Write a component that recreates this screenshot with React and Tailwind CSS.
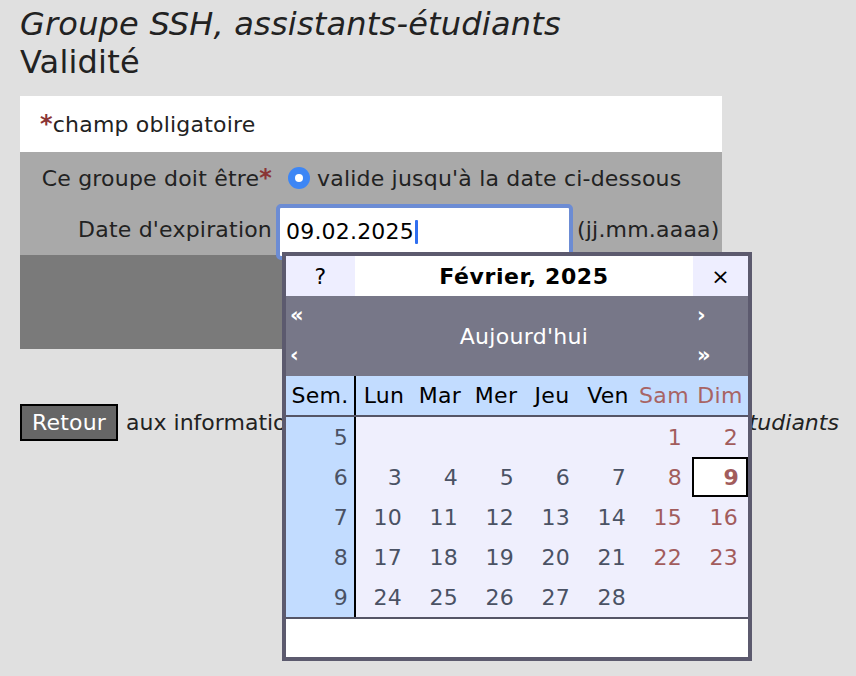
const weeks = [
  { n: 5, days: [null, null, null, null, null, 1, 2] },
  { n: 6, days: [3, 4, 5, 6, 7, 8, 9] },
  { n: 7, days: [10, 11, 12, 13, 14, 15, 16] },
  { n: 8, days: [17, 18, 19, 20, 21, 22, 23] },
  { n: 9, days: [24, 25, 26, 27, 28, null, null] },
];

const dayNames = ["Lun", "Mar", "Mer", "Jeu", "Ven", "Sam", "Dim"];

function Star() {
  return <span className="text-[#8b3535] font-bold text-[24px] leading-none">*</span>;
}

function Calendar() {
  return (
    <div className="absolute left-[262px] top-[156px] w-[470px] border-4 border-[#5c5a6e] bg-white text-[22px] tracking-[0.3px]">
      <div className="flex h-[40px] items-center">
        <div className="w-[69px] h-full bg-[#eeeeff] flex items-center justify-center text-black">?</div>
        <div className="flex-1 h-full bg-white flex items-center justify-center font-bold text-black tracking-[0.6px]">
          Février, 2025
        </div>
        <div className="w-[55px] h-full bg-[#eeeeff] flex items-center justify-center text-black">×</div>
      </div>

      <div className="h-[80px] bg-[#777788] text-white grid grid-cols-[69px_1fr_55px] grid-rows-2">
        <div className="pl-[4px] flex items-center font-bold text-[21px]">«</div>
        <div className="row-span-2 flex items-center justify-center">Aujourd'hui</div>
        <div className="pl-[4px] flex items-center font-bold text-[21px]">›</div>
        <div className="pl-[4px] flex items-center font-bold text-[21px]">‹</div>
        <div className="pl-[4px] flex items-center font-bold text-[21px]">»</div>
      </div>

      <div className="flex h-[41px] bg-[#c2dcff] border-b-2 border-[#555566]">
        <div className="w-[70px] border-r-2 border-black flex items-center justify-center text-black">Sem.</div>
        {dayNames.map((d, i) => (
          <div
            key={d}
            className={`w-[56px] flex items-center justify-center ${i > 4 ? "text-[#a86464]" : "text-black"}`}
          >
            {d}
          </div>
        ))}
      </div>

      {weeks.map((w) => (
        <div key={w.n} className="flex h-[40px]">
          <div className="w-[70px] bg-[#c2dcff] border-r-2 border-black flex items-center justify-end pr-[6px] text-[#4a5264]">
            {w.n}
          </div>
          {w.days.map((d, i) => {
            const weekend = i > 4;
            const selected = d === 9;
            return (
              <div
                key={i}
                className={`w-[56px] flex items-center justify-end ${
                  selected ? "bg-white border-2 border-black font-bold pr-[7px]" : "bg-[#efeffd] pr-[10px]"
                } ${weekend ? "text-[#a25c5c]" : "text-[#4a5264]"}`}
              >
                {d}
              </div>
            );
          })}
        </div>
      ))}

      <div className="h-[40px] border-t-2 border-[#555566] bg-white" />
    </div>
  );
}

export default function App() {
  return (
    <div className="min-h-screen bg-[#e0e0e0] font-['DejaVu_Sans',Verdana,sans-serif] text-[#222] pt-[5px]">
      <h1 className="px-5 text-[32px] leading-[38px] font-normal tracking-[0.2px]">
        <i>Groupe SSH, assistants-étudiants</i>
        <br />
        Validité
      </h1>

      <div className="relative mx-5 mt-[15px] w-[702px] text-[22px] tracking-[0.2px]">
        <div className="h-[56px] bg-white flex items-center px-5">
          <Star />
          champ obligatoire
        </div>

        <div className="h-[103px] bg-[#a9a9a9] pt-[1px]">
          <div className="flex items-center h-[50px]">
            <div className="w-[256px] text-right pr-[4px] flex items-center justify-end">
              Ce groupe doit être
              <Star />
            </div>
            <div className="ml-[12px] w-[22px] h-[22px] rounded-full bg-[#3d86f5] flex items-center justify-center shrink-0">
              <div className="w-[8px] h-[8px] rounded-full bg-white" />
            </div>
            <span className="ml-[7px] whitespace-nowrap">valide jusqu'à la date ci-dessous</span>
          </div>
          <div className="flex items-center h-[52px]">
            <div className="w-[256px] text-right pr-[4px]">Date d'expiration</div>
            <div className="w-[297px] h-[56px] mt-[5px] border-[4px] border-[#6c8cd4] rounded-[5px] bg-white flex items-center pl-[6px] text-black shrink-0">
              09.02.2025
              <span className="inline-block w-[3px] h-[24px] bg-[#2f6ff0] rounded-[1px] ml-[1px]" />
            </div>
            <span className="ml-[4px] whitespace-nowrap">(jj.mm.aaaa)</span>
          </div>
        </div>

        <div className="h-[94px] bg-[#7a7a7a]" />

        <Calendar />
      </div>

      <div className="mx-5 mt-[55px] flex items-center gap-[8px] text-[22px]">
        <div className="h-[37px] px-[10px] border-2 border-black bg-[#666666] text-white flex items-center tracking-[0.2px]">
          Retour
        </div>
        <span className="whitespace-nowrap">
          aux informations sur le groupe <i>Groupe SSH, assistants-étudiants</i>
        </span>
      </div>
    </div>
  );
}
